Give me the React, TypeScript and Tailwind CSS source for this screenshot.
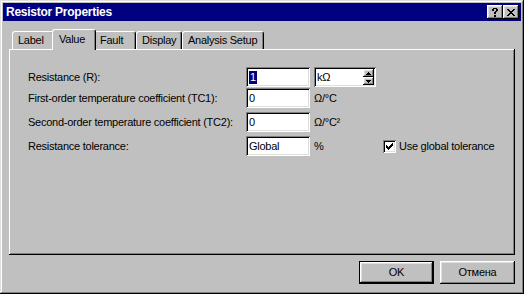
import React from 'react';

const raised = 'shadow-[inset_-1px_-1px_#000,inset_1px_1px_#fff,inset_-2px_-2px_#808080,inset_2px_2px_#dfdfdf]';
const sunken = 'shadow-[inset_1px_1px_#808080,inset_-1px_-1px_#fff,inset_2px_2px_#000,inset_-2px_-2px_#dfdfdf]';

const CloseGlyph = () => (
  <svg width="8" height="7" viewBox="0 0 8 7" shapeRendering="crispEdges">
    <path
      fill="#000"
      d="M0 0h2v1H0zM6 0h2v1H6zM1 1h2v1H1zM5 1h2v1H5zM2 2h4v1H2zM3 3h2v1H3zM2 4h4v1H2zM1 5h2v1H1zM5 5h2v1H5zM0 6h2v1H0zM6 6h2v1H6z"
    />
  </svg>
);

const HelpGlyph = () => (
  <svg width="6" height="9" viewBox="0 0 6 9" shapeRendering="crispEdges">
    <path fill="#000" d="M1 0h4v1H1zM0 1h2v2H0zM4 1h2v2H4zM3 3h2v1H3zM2 4h2v2H2zM2 7h2v2H2z" />
  </svg>
);

const Check = () => (
  <svg width="7" height="7" viewBox="0 0 7 7" shapeRendering="crispEdges">
    <path fill="#000" d="M6 0h1v3H6zM5 1h1v3H5zM4 2h1v3H4zM3 3h1v3H3zM2 4h1v3H2zM1 3h1v3H1zM0 2h1v3H0z" />
  </svg>
);

const Arrow = ({ up }: { up?: boolean }) => (
  <svg width="5" height="3" viewBox="0 0 5 3" shapeRendering="crispEdges">
    {up ? (
      <path fill="#000" d="M2 0h1v1H2zM1 1h3v1H1zM0 2h5v1H0z" />
    ) : (
      <path fill="#000" d="M0 0h5v1H0zM1 1h3v1H1zM2 2h1v1H2z" />
    )}
  </svg>
);

const tabs = ['Label', 'Value', 'Fault', 'Display', 'Analysis Setup'];
const tabWidths: Record<string, string> = {
  Label: 'w-[42px]',
  Value: 'w-[44px]',
  Fault: 'w-[42px]',
  Display: 'w-[46px]',
  'Analysis Setup': 'w-[82px]',
};

const Field = ({ children }: { children: React.ReactNode }) => (
  <div className={`w-[64px] h-[20px] bg-white ${sunken} flex items-center pl-[3px] text-black`}>{children}</div>
);

const Row = ({ label, field, unit, className = '' }: { label: string; field: React.ReactNode; unit: React.ReactNode; className?: string }) => (
  <div className={`flex items-center ${className}`}>
    <div className="w-[218px]">{label}</div>
    <Field>{field}</Field>
    <div className="ml-[4px] flex items-center">{unit}</div>
  </div>
);

export default function App() {
  return (
    <div
      className="w-[524px] h-[294px] bg-[#c0c0c0] p-[2px] flex flex-col text-[11px] tracking-[-0.25px] text-black shadow-[inset_-1px_-1px_#000,inset_1px_1px_#dfdfdf,inset_-2px_-2px_#808080,inset_2px_2px_#fff]"
      style={{ fontFamily: '"Liberation Sans", Arial, sans-serif' }}
    >
      {/* title bar */}
      <div className="mx-[1px] mt-[1px] h-[18px] bg-[#000080] flex items-center pl-[3px] pr-[2px]">
        <span className="text-white font-bold text-[12px] leading-none">Resistor Properties</span>
        <div className="ml-auto flex">
          <div className={`w-[16px] h-[14px] bg-[#c0c0c0] ${raised} flex items-center justify-center`}>
            <HelpGlyph />
          </div>
          <div className={`w-[16px] h-[14px] bg-[#c0c0c0] ${raised} flex items-center justify-center`}>
            <CloseGlyph />
          </div>
        </div>
      </div>

      <div className="px-[7px] mt-[8px] flex flex-col">
        {/* tabs */}
        <div className="flex items-end h-[20px] pl-[3px] relative z-10">
          {tabs.map((t) => {
            const active = t === 'Value';
            return (
              <div
                key={t}
                className={`${tabWidths[t]} bg-[#c0c0c0] border-t border-l border-white border-r border-r-black rounded-t-[3px] shadow-[inset_-1px_0_#808080] flex items-center pl-[5px] ${
                  active ? 'h-[21px] -mx-[2px] -mb-[1px] pl-[6px] pb-[2px] relative z-10' : 'h-[18px]'
                }`}
              >
                {t}
              </div>
            );
          })}
        </div>

        {/* panel */}
        <div className="h-[206px] shadow-[inset_-1px_-1px_#000,inset_1px_1px_#fff,inset_-2px_-2px_#808080] pt-[18px] pl-[19px] flex flex-col">
          <Row
            label="Resistance (R):"
            field={<span className="bg-[#000080] text-white px-[1px] leading-[13px]">1</span>}
            unit={
              <div className={`w-[62px] h-[20px] bg-white ${sunken} flex items-stretch p-[2px]`}>
                <div className="flex-1 flex items-center pl-[1px]">kΩ</div>
                <div className="w-[11px] flex flex-col">
                  <div className={`flex-1 bg-[#c0c0c0] ${raised} flex items-center justify-center`}>
                    <Arrow up />
                  </div>
                  <div className={`flex-1 bg-[#c0c0c0] ${raised} flex items-center justify-center`}>
                    <Arrow />
                  </div>
                </div>
              </div>
            }
          />
          <Row className="mt-[1px]" label="First-order temperature coefficient (TC1):" field="0" unit="Ω/°C" />
          <Row className="mt-[4px]" label="Second-order temperature coefficient (TC2):" field="0" unit="Ω/°C²" />
          <Row
            className="mt-[4px]"
            label="Resistance tolerance:"
            field="Global"
            unit={
              <>
                <span className="w-[69px]">%</span>
                <div className={`w-[13px] h-[13px] bg-white ${sunken} flex items-center justify-center`}>
                  <Check />
                </div>
                <span className="ml-[3px]">Use global tolerance</span>
              </>
            }
          />
        </div>

        {/* buttons */}
        <div className="mt-[6px] flex justify-end gap-[6px]">
          <div className="w-[75px] h-[23px] border border-black">
            <div className={`w-full h-full ${raised} flex items-center justify-center`}>OK</div>
          </div>
          <div className={`w-[75px] h-[23px] ${raised} flex items-center justify-center`}>Отмена</div>
        </div>
      </div>
    </div>
  );
}
